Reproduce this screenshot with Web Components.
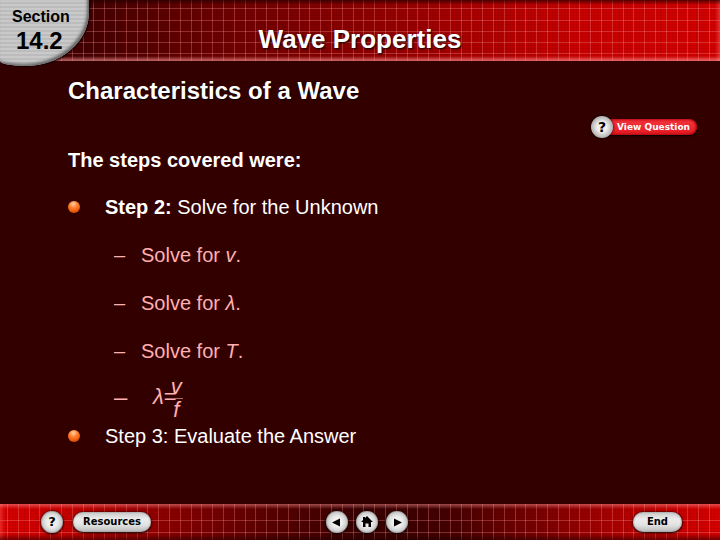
<!DOCTYPE html>
<html lang="en">
<head>
<meta charset="utf-8">
<title>Wave Properties</title>
<style>
  html, body { margin: 0; background: #330000; }
  body { font-family: "Liberation Sans", Arial, sans-serif; color: #fff; }
</style>
</head>
<body>
<lesson-slide>
  <slide-header slot="header">
    <section-tab slot="tab"><span slot="label">Section</span><span slot="number">14.2</span></section-tab>
    Wave Properties
  </slide-header>
  <span slot="topic">Characteristics of a Wave</span>
  <view-question slot="action">View Question</view-question>
  <step-list slot="steps">
    <span slot="intro">The steps covered were:</span>
    <step-item role="listitem"><b>Step 2:</b> Solve for the Unknown</step-item>
    <sub-step role="listitem">Solve for <i>v</i>.</sub-step>
    <sub-step role="listitem">Solve for <i>λ</i>.</sub-step>
    <sub-step role="listitem">Solve for <i>T</i>.</sub-step>
    <sub-step role="listitem" large><wave-formula></wave-formula></sub-step>
    <step-item role="listitem" tight>Step 3: Evaluate the Answer</step-item>
  </step-list>
  <slide-footer slot="footer"></slide-footer>
</lesson-slide>

<script>
const define = (name, html) => {
  const template = document.createElement('template');
  template.innerHTML = html;
  customElements.define(name, class extends HTMLElement {
    constructor() {
      super();
      this.attachShadow({ mode: 'open' }).append(template.content.cloneNode(true));
    }
  });
};

/* Five grid columns repeat every 54px. */
const columns = `linear-gradient(90deg,
  transparent 7px, var(--line) 7px 8px, transparent 8px 18px, var(--line) 18px 19px,
  transparent 19px 29px, var(--line) 29px 30px, transparent 30px 39px, var(--line) 39px 40px,
  transparent 40px 50px, var(--line) 50px 51px, transparent 51px) 0 0 / 54px 100%`;
const weave = 'repeating-linear-gradient(90deg, #0000000e 0 1px, transparent 1px 3px), repeating-linear-gradient(#0000000e 0 1px, transparent 1px 3px)';

define('lesson-slide', `
  <style>
    :host { display: flex; flex-direction: column; min-height: 100vh; background: #330000; }
    main { flex: 1; padding: 16px 23px 0 68px; }
    h2 { margin: 0; font-size: 24px; line-height: 28px; font-weight: bold; text-shadow: 1px 1px 1px #000; }
    .action { display: flex; justify-content: flex-end; padding-top: 11px; }
  </style>
  <slot name="header"></slot>
  <main>
    <h2><slot name="topic"></slot></h2>
    <div class="action"><slot name="action"></slot></div>
    <slot name="steps"></slot>
  </main>
  <slot name="footer"></slot>`);

define('slide-header', `
  <style>
    :host { display: block; position: relative; --line: #ff909052; }
    header {
      display: flex; justify-content: center; box-sizing: border-box; height: 61px; padding-top: 24px;
      background:
        linear-gradient(#200000b0, transparent 5px),
        linear-gradient(transparent 56px, #ff9c9c90 60px),
        linear-gradient(270deg, #ff606080, transparent 5px),
        linear-gradient(transparent 8px, var(--line) 8px 9px, transparent 9px 20px, var(--line) 20px 21px,
          transparent 21px 31px, var(--line) 31px 32px, transparent 32px 42px, var(--line) 42px 43px,
          transparent 43px 53px, var(--line) 53px 54px, transparent 54px),
        ${columns}, ${weave},
        linear-gradient(90deg, #440000 12%, #680000 28%, #960000 55%, #c80000 80%, #d40000);
    }
    h1 { margin: 0; font-size: 26px; line-height: 30px; text-shadow: 1px 1px 2px #000; }
  </style>
  <header><h1><slot></slot></h1></header>
  <slot name="tab"></slot>`);

define('section-tab', `
  <style>
    :host {
      position: absolute; left: 0; top: 0; box-sizing: border-box; width: 89px; height: 66px; padding: 7px 0 0 12px;
      border-radius: 0 0 64px 25px / 0 0 54px 5px; color: #000; font-weight: bold;
      background: repeating-linear-gradient(#c9c9c9 0 2px, #bcbcbc 2px 4px);
      box-shadow: inset -2px -2px 3px #666, 1px 1px 2px #180000;
    }
    .label { display: block; font-size: 16px; line-height: 20px; }
    .number { display: block; padding-left: 4px; font-size: 24px; line-height: 28px; }
  </style>
  <span class="label"><slot name="label"></slot></span>
  <span class="number"><slot name="number"></slot></span>`);

define('view-question', `
  <style>
    :host { display: block; }
    button {
      display: flex; align-items: center; height: 22px; padding: 0; border: 0; background: none;
      color: #fff; font: bold 9px/16px "DejaVu Sans", Verdana, sans-serif; cursor: pointer;
    }
    .mark {
      z-index: 1; width: 22px; height: 22px; border-radius: 50%; color: #000; text-align: center;
      font-size: 14px; line-height: 22px; background: radial-gradient(circle, #f0f0f0 30%, #a8a8a8 75%);
      box-shadow: 0 0 3px #000;
    }
    .label {
      margin-left: -8px; padding: 0 7px 0 12px; border-radius: 0 8px 8px 0; height: 16px;
      background: linear-gradient(#d81820, #f03038 20%, #ec2028 75%, #c81018);
      box-shadow: inset -1px 0 2px #900, 0 1px 2px #000;
    }
  </style>
  <button type="button"><span class="mark">?</span><span class="label"><slot></slot></span></button>`);

define('step-list', `
  <style>
    :host { display: block; }
    p { margin: 0; padding-top: 10px; font-size: 20px; line-height: 24px; font-weight: bold; }
  </style>
  <p><slot name="intro"></slot></p>
  <div role="list"><slot></slot></div>`);

define('step-item', `
  <style>
    :host { display: flex; align-items: center; gap: 25px; padding-top: 23px; font-size: 20px; line-height: 24px; }
    :host([tight]) { padding-top: 3px; }
    .dot {
      width: 12px; height: 12px; border-radius: 50%;
      background: radial-gradient(circle at 45% 25%, #ffc090 0 8%, #ff8030 35%, #f06010 62%, #a83000);
    }
  </style>
  <span class="dot"></span><span><slot></slot></span>`);

define('sub-step', `
  <style>
    :host { display: flex; align-items: center; padding: 24px 0 0 46px; color: #ffb0b0; font-size: 20px; line-height: 24px; }
    :host([large]) { padding-top: 9px; font-size: 24px; }
    .dash { width: 27px; }
    :host([large]) .dash { width: 39px; }
  </style>
  <span class="dash">–</span><span><slot></slot></span>`);

define('wave-formula', `
  <style>
    :host { display: flex; align-items: center; font-size: 22px; line-height: 22px; }
    .fraction { display: grid; justify-items: center; margin-left: -7px; padding-top: 4px; font-style: italic; }
    .top { border-bottom: 1px solid #b86868; padding: 0 1px; }
  </style>
  <i>λ</i><span>=</span><span class="fraction"><span class="top">v</span><span>f</span></span>`);

define('nav-button', `
  <style>
    :host { display: block; }
    button {
      display: grid; place-items: center; height: 20px; padding: 0 10px; border: 0; border-radius: 10px; color: #000;
      font: bold 10px/20px "DejaVu Sans", Verdana, sans-serif; cursor: pointer;
      background: radial-gradient(closest-side, #eeeeee 45%, #cccccc 90%, #b0b0b0);
      box-shadow: inset 0 0 2px #777, 0 1px 3px #100000, 0 0 2px #200000;
    }
    :host([pill]) button { background: linear-gradient(#c8c8c8, #ececec 35%, #e2e2e2 65%, #b8b8b8); }
    :host([wide]) button { padding: 0 14px; }
    :host([round]) button { width: 22px; height: 22px; padding: 0; border-radius: 50%; font-size: 13px; }
    ::slotted(svg) { display: block; }
  </style>
  <button type="button"><slot></slot></button>`);

define('slide-footer', `
  <style>
    :host { display: block; --line: #ff909052; }
    footer {
      display: grid; grid-template-columns: 51fr auto 49fr; align-items: center; box-sizing: border-box;
      height: 36px; padding: 0 38px 0 41px;
      background:
        linear-gradient(#ff989880, transparent 5px),
        linear-gradient(transparent 30px, #20000090 36px),
        linear-gradient(90deg, #ff505080, transparent 5px),
        linear-gradient(transparent 16px, var(--line) 16px 17px, transparent 17px 28px, var(--line) 28px 29px, transparent 29px),
        ${columns}, ${weave},
        linear-gradient(90deg, #d80000, #c80000 9%, #900000 22%, #580000 38%, #380000 50%, #440000 62%, #800000 76%, #b80000 88%, #d80000);
    }
    div { display: flex; align-items: center; gap: 10px; }
    .move { gap: 8px; }
    .end { justify-content: flex-end; }
    svg { width: 14px; height: 14px; }
  </style>
  <footer>
    <div><nav-button round>?</nav-button><nav-button pill>Resources</nav-button></div>
    <div class="move">
      <nav-button round><svg viewBox="0 0 14 14" role="img" aria-label="Previous"><path d="M2 7.500 10 3.500V11.500Z"/></svg></nav-button>
      <nav-button round><svg viewBox="0 0 14 14" role="img" aria-label="Home"><path d="M7 1 13 7H11V12H8.500V8.500H5.500V12H3V7H1L3 5V2H5V3Z"/></svg></nav-button>
      <nav-button round><svg viewBox="0 0 14 14" role="img" aria-label="Next"><path d="M12 7.500 4 3.500V11.500Z"/></svg></nav-button>
    </div>
    <div class="end"><nav-button pill wide>End</nav-button></div>
  </footer>`);
</script>
</body>
</html>
